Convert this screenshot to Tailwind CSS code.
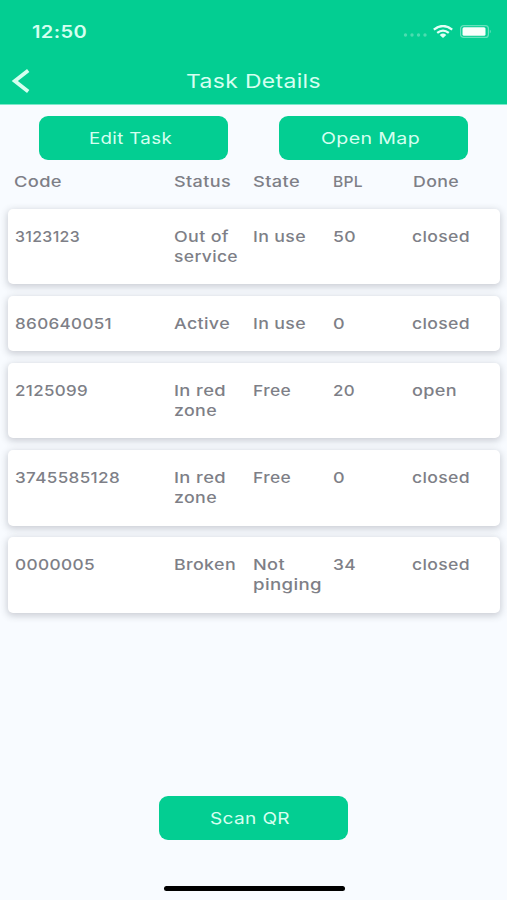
<!DOCTYPE html>
<html lang="en">
<head>
<meta charset="utf-8">
<title>Task Details</title>
<script src="https://cdn.jsdelivr.net/npm/@tailwindcss/browser@4"></script>
</head>
<body class="bg-[#f8fbff]">
<div class="w-[507px] h-[900px] flex flex-col overflow-hidden bg-[#f8fbff] font-['Inter','Noto_Sans',sans-serif] text-[15px] leading-5 text-[#7e7f87]">
  <header class="h-[105px] shrink-0 bg-[#03ce92] border-b border-[#7ce9ca] text-[#d5fff0]">
    <div class="h-[61px] pt-[21px] pl-8 pr-[15px] flex justify-between">
      <span class="h-5 pt-px font-semibold text-[17px] whitespace-nowrap" data-w="55">12:50</span>
      <div class="flex items-center h-5">
        <svg class="w-[26px] h-3 mt-2" viewBox="0 0 26 12" fill="#4cdcb0"><circle cx="3.5" cy="6" r="1.7"/><circle cx="10" cy="6" r="1.7"/><circle cx="16.5" cy="6" r="1.7"/><circle cx="23" cy="6" r="1.7"/></svg>
        <svg class="w-[20px] h-[13px] ml-[5px]" viewBox="0 0 20 13" fill="none" stroke="#e4fff6" stroke-width="2.3"><path d="M.8 4.6Q10-2.6 19.2 4.6"/><path d="M4.2 7.9Q10 3.3 15.8 7.9"/><path d="M6.7 9.9Q10 7.2 13.3 9.9L10 13Z" fill="#e4fff6" stroke="none"/></svg>
        <svg class="w-[32px] h-[13px] ml-[7px]" viewBox="0 0 32 13"><rect x=".6" y=".6" width="27.8" height="11.8" rx="3" fill="none" stroke="#66e2bd" stroke-width="1.2"/><rect x="2.5" y="2.3" width="23" height="8.4" rx="1.5" fill="#f7fffc"/><path d="M29.8 4.5q2 2 0 4Z" fill="#66e2bd"/></svg>
      </div>
    </div>
    <div class="h-[40px] flex items-center">
      <svg class="w-5 h-6 ml-[11px] shrink-0" viewBox="0 0 20 24" fill="none" stroke="#d5fff0" stroke-width="3.8"><path d="M17.2 1.6 3.8 12 17.2 22.4"/></svg>
      <span class="ml-[155px] pt-px text-[19px] whitespace-nowrap" data-w="135">Task Details</span>
    </div>
  </header>

  <div class="mt-[11px] pl-[39.4px] flex gap-[51px]">
    <button class="w-[189px] h-[44px] rounded-[9px] bg-[#03ce92] text-[#d5fff0] text-[16.5px] text-left pl-[50px]"><span class="whitespace-nowrap" data-w="83">Edit Task</span></button>
    <button class="w-[189px] h-[44px] rounded-[9px] bg-[#03ce92] text-[#d5fff0] text-[16.5px] text-left pl-[42px]"><span class="whitespace-nowrap" data-w="99">Open Map</span></button>
  </div>

  <div class="mt-[12px] h-5 pl-[14px] grid grid-cols-[159.5px_79.5px_80px_79.5px_1fr] font-medium">
    <div data-w="48">Code</div><div data-w="57">Status</div><div data-w="47">State</div><div data-w="30">BPL</div><div data-w="46">Done</div>
  </div>

  <main id="rows" class="mt-[16.5px] pl-[8px] pr-[7px] flex flex-col gap-[11.7px] font-medium"></main>

  <div class="mt-auto flex flex-col items-center pb-[9px]">
    <button class="w-[189px] h-[44px] rounded-[9px] bg-[#03ce92] text-[#d5fff0] text-[16.5px] text-left pl-[51px]"><span class="whitespace-nowrap" data-w="80">Scan QR</span></button>
    <div class="ml-px mt-[45.5px] w-[181px] h-[5.5px] rounded-full bg-black"></div>
  </div>
</div>
<script>
// Each cell is a list of lines: [text, width in pixels]
const rows = [
  [[["3123123", 65]], [["Out of", 55], ["service", 64]], [["In use", 53]], [["50", 23]], [["closed", 58]]],
  [[["860640051", 97]], [["Active", 56]], [["In use", 53]], [["0", 12]], [["closed", 58]]],
  [[["2125099", 73]], [["In red", 52], ["zone", 43]], [["Free", 38]], [["20", 22]], [["open", 45]]],
  [[["3745585128", 105]], [["In red", 52], ["zone", 43]], [["Free", 38]], [["0", 12]], [["closed", 58]]],
  [[["0000005", 80]], [["Broken", 62]], [["Not", 32], ["pinging", 69]], [["34", 23]], [["closed", 58]]]
];
document.getElementById("rows").innerHTML = rows.map(r =>
  '<section class="rounded-[5px] bg-white pt-[18px] pb-[17.5px] pl-[7.2px] grid grid-cols-[159px_79.2px_79.6px_79.2px_1fr] shadow-[0_2px_7px_1px_rgba(55,60,75,0.23)]">' +
  r.map(c => '<div>' + c.map(([t, w]) => '<div class="whitespace-nowrap" data-w="' + w + '">' + t + '</div>').join("") + '</div>').join("") +
  '</section>').join("");
// Widen the letterforms so that each line takes its set width
function fit() {
  document.querySelectorAll("[data-w]").forEach(e => {
    e.style.display = "block";
    e.style.width = "max-content";
    e.style.letterSpacing = "0.3px";
    e.style.transformOrigin = "left center";
    e.style.transform = "none";
    e.style.transform = "scaleX(" + e.dataset.w / e.getBoundingClientRect().width + ")";
  });
}
fit();
new ResizeObserver(fit).observe(document.querySelector("header span"));
window.addEventListener("load", () => { fit(); document.fonts.ready.then(fit); requestAnimationFrame(fit); });
</script>
</body>
</html>
